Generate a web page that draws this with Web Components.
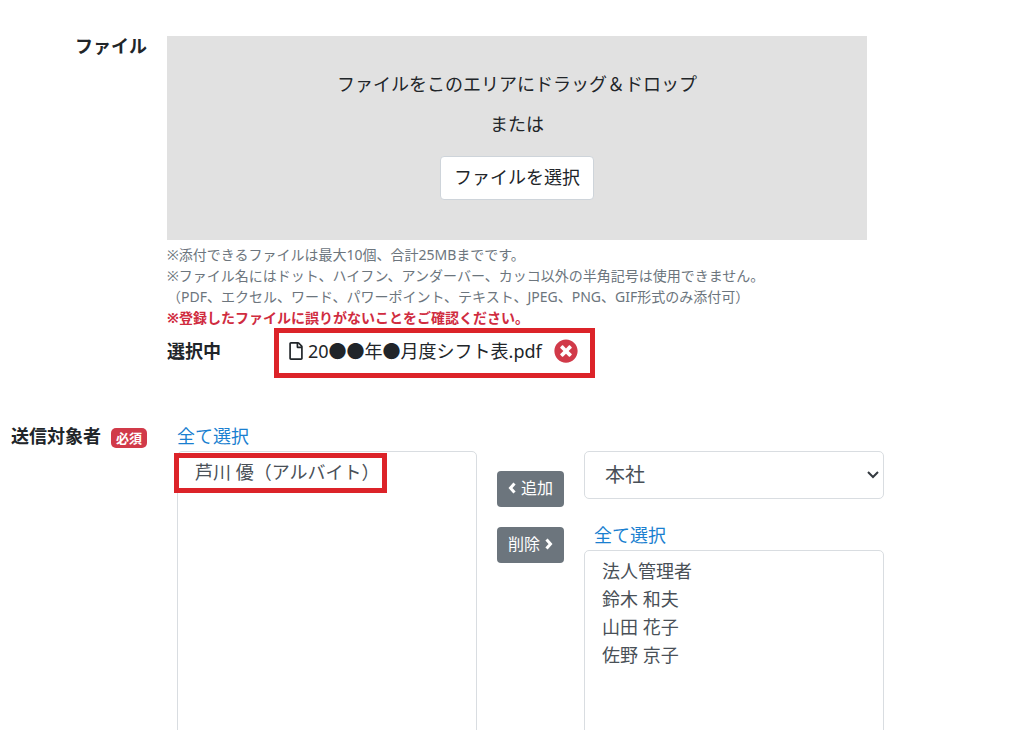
<!DOCTYPE html>
<html lang="ja">
<head>
<meta charset="utf-8">
<title>ファイル送信</title>
<style>
    html, body {
        height: 100%;
    }

    body {
        margin: 0;
        overflow: hidden;
        background-color: #fff;
        color: #212529;
        font: 18px/20px "Noto Sans", "Noto Sans CJK JP", sans-serif;
    }
</style>
</head>
<body>

<send-form>
    <form-row>
        <span slot="label">ファイル</span>
        <file-drop></file-drop>
        <file-notes>
            <div>※添付できるファイルは最大10個、合計25MBまでです。</div>
            <div>※ファイル名にはドット、ハイフン、アンダーバー、カッコ以外の半角記号は使用できません。</div>
            <div>（PDF、エクセル、ワード、パワーポイント、テキスト、JPEG、PNG、GIF形式のみ添付可）</div>
            <strong slot="warning">※登録したファイルに誤りがないことをご確認ください。</strong>
        </file-notes>
        <selected-file>20●●年●月度シフト表.pdf</selected-file>
    </form-row>
    <form-row>
        <span slot="label">送信対象者</span>
        <required-badge slot="label">必須</required-badge>
        <member-picker></member-picker>
    </form-row>
</send-form>

<script>
function define(name, html, setup) {
    const template = document.createElement('template');
    template.innerHTML = html;

    window.customElements.define(name, class extends HTMLElement {
        constructor() {
            super();
            this.attachShadow({ mode: 'open' });
            this.shadowRoot.appendChild(template.content.cloneNode(true));
            if (setup) setup(this);
        }
    });
}

define('send-form', `
    <style>
        :host {
            display: flex;
            flex-direction: column;
            gap: 48px;
            padding-top: 36px;
        }
    </style>
    <slot></slot>
`);

define('form-row', `
    <style>
        :host {
            display: grid;
            grid-template-columns: 147px minmax(0, 1fr);
            column-gap: 20px;
        }

        .label {
            display: flex;
            justify-content: flex-end;
            align-items: flex-start;
            gap: 10px;
            font-weight: bold;
            white-space: nowrap;
        }
    </style>
    <div class="label"><slot name="label"></slot></div>
    <div><slot></slot></div>
`);

define('required-badge', `
    <style>
        :host {
            display: block;
            margin-top: 2px;
            padding: 0 5px;
            border-radius: 5px;
            background-color: #d13a49;
            color: #fff;
            font-size: 13px;
            line-height: 20px;
        }
    </style>
    <slot></slot>
`);

define('file-drop', `
    <style>
        :host {
            display: flex;
            flex-direction: column;
            align-items: center;
            max-width: 700px;
            padding: 28px 0 40px;
            background-color: #e1e1e1;
        }

        p {
            margin: 0;
            line-height: 40px;
        }

        button {
            height: 44px;
            margin-top: 12px;
            padding: 0 13px 3px;
            border: 1px solid #ced4da;
            border-radius: 4px;
            background-color: #fff;
            color: inherit;
            font: inherit;
        }
    </style>
    <p>ファイルをこのエリアにドラッグ＆ドロップ</p>
    <p>または</p>
    <button type="button">ファイルを選択</button>
`);

define('file-notes', `
    <style>
        :host {
            display: block;
            margin-top: 4px;
            color: #6c757d;
            font-size: 14px;
            line-height: 21px;
        }

        .warning {
            color: #d02c3f;
        }
    </style>
    <slot></slot>
    <div class="warning"><slot name="warning"></slot></div>
`);

define('selected-file', `
    <style>
        :host {
            display: grid;
            grid-template-columns: 107px max-content;
            align-items: center;
        }

        strong {
            padding-bottom: 5px;
        }

        .file {
            display: flex;
            align-items: center;
            height: 35px;
            padding: 0 12px 5px 10px;
            border: 5px solid #dc2329;
        }

        .doc {
            width: 14px;
            height: 18px;
            margin-right: 5px;
        }

        button {
            display: flex;
            margin-left: 12px;
            padding: 0;
            border: 0;
            background: none;
            color: #d13a49;
        }
    </style>
    <strong>選択中</strong>
    <div class="file">
        <svg class="doc" viewBox="0 0 384 512" fill="currentColor"><path d="M369.9 97.9L286 14C277 5 264.8 0 252.1 0H48C21.5 0 0 21.5 0 48v416c0 26.5 21.5 48 48 48h288c26.5 0 48-21.5 48-48V131.9c0-12.7-5.1-25-14.1-34zM332.1 128H256V51.9l76.1 76.1zM48 464V48h160v104c0 13.3 10.7 24 24 24h104v288H48z"/></svg>
        <span><slot></slot></span>
        <button type="button" aria-label="削除">
            <svg width="24" height="24" viewBox="0 0 512 512" fill="currentColor"><path d="M256 8C119 8 8 119 8 256s111 248 248 248 248-111 248-248S393 8 256 8zm121.6 313.1c4.7 4.7 4.7 12.3 0 17L338 377.6c-4.7 4.7-12.3 4.7-17 0L256 312l-65.1 65.6c-4.7 4.7-12.3 4.7-17 0L134.4 338c-4.7-4.7-4.7-12.3 0-17l65.6-65-65.6-65.1c-4.7-4.7-4.7-12.3 0-17l39.6-39.6c4.7-4.7 12.3-4.7 17 0l65 65.7 65.1-65.6c4.7-4.7 12.3-4.7 17 0l39.6 39.6c4.7 4.7 4.7 12.3 0 17L312 256l65.6 65.1z"/></svg>
        </button>
    </div>
`, el => {
    el.shadowRoot.querySelector('button').addEventListener('click', () => el.remove());
});

define('member-picker', `
    <style>
        :host {
            display: grid;
            grid-template-columns: minmax(0, 300px) max-content minmax(0, 300px);
            column-gap: 20px;
            padding-left: 10px;
        }

        .column {
            display: flex;
            flex-direction: column;
            position: relative;
        }

        .source {
            padding-top: 25px;
        }

        .actions {
            display: flex;
            flex-direction: column;
            gap: 20px;
            padding-top: 45px;
        }

        a {
            align-self: flex-start;
            margin-bottom: 5px;
            color: #1a7fd0;
            text-decoration: none;
        }

        .source a {
            margin: 26px 0 5px 10px;
        }

        select {
            box-sizing: border-box;
            width: 100%;
            border: 1px solid #d9dde1;
            border-radius: 5px;
            background-color: #fff;
            color: #495057;
            font: inherit;
        }

        .office {
            display: grid;
            align-items: center;
        }

        .office select {
            appearance: none;
            grid-area: 1 / 1;
            height: 48px;
            padding: 0 30px 0 20px;
            font-size: 20px;
        }

        .office svg {
            grid-area: 1 / 1;
            justify-self: end;
            margin-right: 4px;
            fill: none;
            stroke: #343a40;
            stroke-width: 2;
            pointer-events: none;
        }

        .members {
            height: 320px;
            padding: 6px 15px;
        }

        .members option {
            min-height: 28px;
            padding: 0 2px;
            line-height: 28px;
        }

        button {
            display: flex;
            align-items: center;
            justify-content: center;
            gap: 5px;
            height: 36px;
            padding: 0 11px 2px;
            border: 0;
            border-radius: 4px;
            background-color: #6c757d;
            color: #fff;
            font: inherit;
            font-size: 16px;
        }

        .chevron {
            fill: none;
            stroke: currentColor;
            stroke-width: 3;
        }

        /* red frame over the first member */
        .mark {
            position: absolute;
            top: 27px;
            left: -3px;
            box-sizing: border-box;
            width: 213px;
            height: 40px;
            border: 5px solid #dc2329;
            pointer-events: none;
        }
    </style>
    <div class="column">
        <a href="#">全て選択</a>
        <select class="members" id="chosen" multiple aria-label="送信対象者">
            <option>芦川 優（アルバイト）</option>
        </select>
        <div class="mark"></div>
    </div>
    <div class="actions">
        <button type="button" id="add">
            <svg class="chevron" width="8" height="12" viewBox="0 0 8 12"><path d="M6.5 1.5 2.5 6l4 4.5"/></svg>
            追加
        </button>
        <button type="button" id="remove">
            削除
            <svg class="chevron" width="8" height="12" viewBox="0 0 8 12"><path d="M1.5 1.5l4 4.5-4 4.5"/></svg>
        </button>
    </div>
    <div class="column source">
        <div class="office">
            <select aria-label="所属">
                <option>本社</option>
            </select>
            <svg width="14" height="10" viewBox="0 0 14 10"><path d="M2 2l5 5 5-5"/></svg>
        </div>
        <a href="#">全て選択</a>
        <select class="members" id="available" multiple aria-label="候補者">
            <option>法人管理者</option>
            <option>鈴木 和夫</option>
            <option>山田 花子</option>
            <option>佐野 京子</option>
        </select>
    </div>
`, el => {
    const root = el.shadowRoot;
    const chosen = root.querySelector('#chosen');
    const available = root.querySelector('#available');

    root.querySelector('#add').addEventListener('click', () => {
        chosen.append(...available.selectedOptions);
    });
    root.querySelector('#remove').addEventListener('click', () => {
        available.append(...chosen.selectedOptions);
    });
    root.querySelectorAll('a').forEach(link => {
        link.addEventListener('click', event => {
            event.preventDefault();
            for (const option of link.parentNode.querySelector('.members').options) {
                option.selected = true;
            }
        });
    });
});
</script>
</body>
</html>
